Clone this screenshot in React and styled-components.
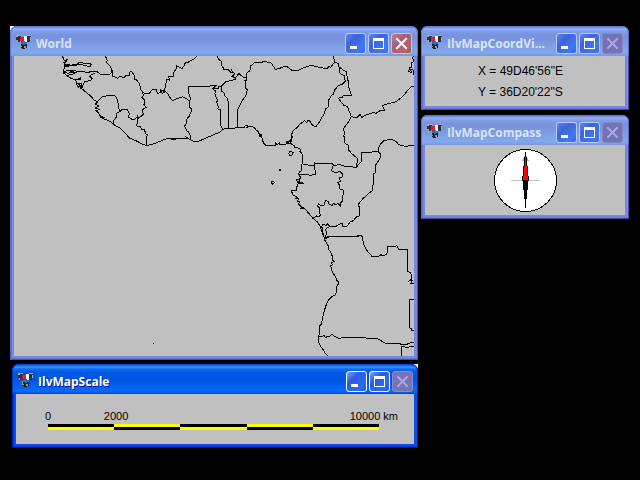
import React from "react";
import styled, { createGlobalStyle, css } from "styled-components";

const GlobalStyle = createGlobalStyle`
  *, *::before, *::after { box-sizing: border-box; }
  body {
    margin: 0;
    background: #000;
    color: #000;
    font-family: "Liberation Sans", Arial, sans-serif;
    font-size: 12px;
  }
`;

const Desktop = styled.main`
  min-height: 100vh;
  padding: 26px 11px 32px 10px;
  display: grid;
  grid-template-columns: minmax(0, 51fr) minmax(0, 26fr);
  align-items: start;
  column-gap: 3px;
`;

const Column = styled.div`
  display: grid;
  grid-template-columns: minmax(0, 1fr);
  row-gap: ${(p) => p.$gap}px;
`;

/* The square behind a window; its rounded corners can show a light chip. */
const Slot = styled.div`
  margin-left: ${(p) => (p.$inset ? 2 : 0)}px;
  background: ${(p) =>
    p.$chip ? `linear-gradient(#fff, #fff) top ${p.$chip} / 4px 4px no-repeat` : "none"};
`;

const Frame = styled.section`
  border-radius: 7px 7px 0 0;
  padding: 0 4px 4px;
  ${(p) =>
    p.$active
      ? css`
          background: #0b4ee6;
          box-shadow: inset 1px 0 #0019cf, inset -1px -1px #00138c, inset 2px -2px #0831d9;
        `
      : css`
          background: #7689e0;
          box-shadow: inset 1px 0 #5f68c8, inset -1px -1px #4a4fae, inset 2px -2px #6575d6;
        `}
`;

const TitleBar = styled.header`
  height: 30px;
  margin: 0 -4px;
  padding: 4px ${(p) => (p.$active ? 5 : 6)}px 0 6px;
  display: flex;
  align-items: center;
  gap: 4px;
  border-radius: 7px 7px 0 0;
  background: ${(p) =>
    p.$active
      ? "linear-gradient(#0a50d8 0, #0a50d8 1px, #3a95ff 3px, #0a6cf4 5px, #0058e6 8px, #0054e3 16px, #0560f5 22px, #0669ff 27px, #0053dd 29px, #0044c4 30px)"
      : "linear-gradient(#6479d6 0, #6479d6 1px, #94b4f2 3px, #829fe6 5px, #7893dd 9px, #7a96df 15px, #80a1e7 21px, #82a9ec 27px, #7a93e0 30px)"};
  box-shadow: inset 1px 0 ${(p) => (p.$active ? "#0038b8" : "#6676d0")},
    inset -1px 0 ${(p) => (p.$active ? "#0030a8" : "#5c68c2")};
`;

const Title = styled.h1`
  flex: 1;
  min-width: 0;
  margin: 0;
  padding-top: 2px;
  overflow: hidden;
  white-space: nowrap;
  text-overflow: ellipsis;
  font: 700 12px/18px "Open Sans", "Noto Sans", sans-serif;
  color: ${(p) => (p.$active ? "#fff" : "#d8e4f8")};
  text-shadow: ${(p) => (p.$active ? "1px 1px #0a1883" : "none")};
`;

const Controls = styled.div`
  display: flex;
  gap: 2px;
`;

const buttonLooks = {
  active: css`
    border-color: #fff;
    background: linear-gradient(135deg, #7ba2f5, #2a5be0 35%, #2a6cf5 75%, #2456cf);
  `,
  inactive: css`
    border-color: #b9cbf4;
    background: linear-gradient(135deg, #5f84e8, #3b64dc 35%, #4079f0 75%, #3768e0);
  `,
  close: css`
    border-color: #cbbfdc;
    background: linear-gradient(135deg, #ba7c90, #a86075 40%, #b5636c 80%, #a05568);
  `,
  disabledActive: css`
    border-color: #8e8dc9;
    background: #7673b6;
  `,
  disabled: css`
    border-color: #8587c8;
    background: #7272b4;
  `,
};

const CaptionButton = styled.button`
  width: 21px;
  height: 21px;
  padding: 0;
  display: grid;
  place-items: center;
  border: 1px solid;
  border-radius: 3px;
  color: #fff;
  ${(p) => buttonLooks[p.$look]}
  &:disabled { color: #a9a9da; }
`;

const Icon = styled.svg`
  display: block;
  flex: none;
`;

const Client = styled.div`
  background: #c0c0c0;
`;

const MapView = styled.svg`
  display: block;
  width: 100%;
  aspect-ratio: 4 / 3;
  fill: none;
  stroke: #000;
  shape-rendering: crispEdges;
  path, circle { vector-effect: non-scaling-stroke; }
`;

const Readout = styled.div`
  height: 50px;
  padding: 5px 0 3px 53px;
  line-height: 21px;
`;

const Line = styled.div`
  white-space: nowrap;
`;

const CompassView = styled.div`
  height: 70px;
  display: grid;
  place-items: center;
`;

const ScaleView = styled.div`
  height: 50px;
  padding: 15px 16px 0 29px;
`;

const Labels = styled.div`
  display: grid;
  grid-template-columns: 1fr 1fr 4fr;
  font-size: 11px;
  line-height: 15px;
`;

const Label = styled.span`
  white-space: nowrap;
  justify-self: ${(p) => (p.$end ? "end" : "start")};
`;

const Bar = styled.div`
  display: flex;
  margin: 0 19px 0 3px;
`;

const Segment = styled.div`
  flex: 1;
  height: 6px;
  border: 0 solid ${(p) => (p.$flip ? "#ff0" : "#000")};
  border-top-width: 3px;
  background: ${(p) => (p.$flip ? "#000" : "#ff0")};
`;

function AppIcon() {
  return (
    <Icon width="16" height="16" viewBox="0 0 16 16" aria-hidden="true" shapeRendering="crispEdges">
      <path d="M0 1h5v5H4v1H1V5H0zM11 1h4v4h-1v2h-3z" fill="#303030" />
      <path d="M0 0h5v1H2v1H0zM11 0h4v1h-4zM14 2h1v3h-1zM1 5h1v2H1z" fill="#aaa" />
      <path d="M4 2h4v4H7v1H5V6H4z" fill="#f01820" />
      <path d="M8 1h3v6H9V6H8z" fill="#fff" />
      <path d="M5 7h2V6h2v1h2v2H9v1H7V9H5z" fill="#1478c8" />
      <path d="M5 9h2v1h2V9h2v4H9v1H6v-1H5z" fill="#202020" />
      <path d="M4 8h1v3h1v1H4zM8 11h2v2H8z" fill="#999" />
    </Icon>
  );
}

const glyphs = {
  Minimize: <path d="M4 12h7v3H4z" fill="currentColor" />,
  Maximize: (
    <path d="M4 4h11v11H4zM5 7v7h9V7z" fill="currentColor" fillRule="evenodd" />
  ),
  Close: (
    <path d="M5 5l9 9M14 5l-9 9" stroke="currentColor" strokeWidth="2" strokeLinecap="square" />
  ),
};

function Control({ name, look, disabled }) {
  return (
    <CaptionButton type="button" aria-label={name} $look={look} disabled={disabled}>
      <Icon
        width="19"
        height="19"
        viewBox="0 0 19 19"
        aria-hidden="true"
        shapeRendering={name === "Close" ? "auto" : "crispEdges"}
      >
        {glyphs[name]}
      </Icon>
    </CaptionButton>
  );
}

function Window({ title, active, closable, chip, inset, children }) {
  const look = active ? "active" : "inactive";
  const closeLook = closable ? "close" : active ? "disabledActive" : "disabled";
  return (
    <Slot $chip={chip} $inset={inset}>
      <Frame $active={active} aria-label={title}>
        <TitleBar $active={active}>
          <AppIcon />
          <Title $active={active}>{title}</Title>
          <Controls>
            <Control name="Minimize" look={look} />
            <Control name="Maximize" look={look} />
            <Control name="Close" look={closeLook} disabled={!closable} />
          </Controls>
        </TitleBar>
        <Client>{children}</Client>
      </Frame>
    </Slot>
  );
}

/* Coastlines and borders, in sheets with three units to the pixel. */
const sheets = [
  {
    x: -14,
    y: -36,
    lines: [
      "186,108 190,114 193,122 202,118 196,125 201,124 192,128 196,136 222,138 196,132 206,140 194,138 191,150 192,160 200,166 212,164 204,160 192,156 204,150 228,152 210,156 228,158 216,164 200,166 214,176 232,180 242,172 240,180 226,180 230,188 242,198 236,202 228,192 244,190 246,204 240,204 248,208 262,220 272,228 282,240 292,246 286,252 296,258 286,264 298,268 288,272 296,280 302,292 310,292 300,286 310,296 326,302 338,310 344,316 360,324 376,340 388,354 408,362 430,374 442,376 460,372 480,364 500,356 528,358 530,354 510,356 560,355 558,351 572,360 584,366 600,362 614,356 630,348",
      "200,137 230,133 240,126 256,132 266,130 274,133 270,140 260,138 240,132 222,138 200,136",
      "200,160 228,156 242,154 266,158 270,154 290,154 300,162 308,165 330,162 337,153",
      "246,204 250,192 254,184 272,182 276,176 270,170 274,164 286,158",
      "316,108 322,122 318,126 332,140 337,154 336,168 344,170 354,175 360,168 372,174 376,168 388,166 390,156 396,156 402,165 404,180 410,180 418,190 422,208 428,215",
      "290,248 298,238 308,230 330,226 346,228 352,240 356,256 358,276 350,280 350,290 342,300 340,310",
      "358,276 366,268 382,268 388,280 386,292 400,300 412,292 420,292",
      "428,215 430,226 426,232 434,240 432,254 438,262 426,270 430,282 422,290 416,294 412,288 412,308 410,318 420,320 426,328 434,328 436,340 442,344 438,360 440,376",
      "428,215 434,222 446,222 458,208 468,208 472,220 480,218 482,206 486,220 494,216 488,210",
      "494,212 504,222 512,236 518,242 530,236 548,230 560,236 568,244 572,236 566,218 566,200 630,200",
      "493,216 496,200 500,178 508,180 506,170 522,168 522,156 530,144 530,138 546,146 552,138 556,128 562,128 580,118 592,108",
      "568,244 570,262 576,268 568,288 558,300 560,308 554,318 560,332 566,336 570,346 572,360",
    ],
  },
  {
    x: 196,
    y: -36,
    lines: [
      "0,349 16,342 30,336 38,328 52,325 70,325 82,322 104,322 106,316 122,320 108,322 122,318 134,324 140,332 146,336",
      "0,198 16,198 8,206 18,214 14,220 18,232 24,240 20,246 26,262 22,266 32,270 30,300 34,322 40,330",
      "10,206 24,206 26,200 34,200 34,214 42,218 44,228 50,232 56,248 56,325",
      "26,200 34,198 46,186 60,182 76,178 76,172 64,170 74,160 64,156",
      "22,108 26,118 36,126 34,134 42,148 56,150 62,158 64,150 74,162 68,168 76,174 84,164 86,160 100,172 108,172",
      "370,108 374,126 362,142 356,140 350,146 338,144 304,136 290,140 274,146 266,151 246,151 236,144 232,140 222,140 206,146 196,148 184,130 180,128 160,124 156,127 134,127 122,138 120,152 110,160 110,180 104,182 108,190 106,204 112,210 108,226 94,246 86,262 82,270 84,321",
      "374,126 384,130 386,140 400,150 410,156 412,180 416,182 416,200 424,226 400,226 398,232 386,234 390,242 402,256 412,260 424,290",
      "388,142 388,156 392,162 402,166 406,184 398,192 386,196 374,210 370,224 364,226 356,240 354,262 346,266 344,280 332,298 330,304 318,320 308,316 298,302 294,300 290,308 284,302 270,312 264,320 248,334 244,352 246,366",
      "424,290 440,294 450,284 456,292 466,286 490,278 498,280 510,272 524,270 518,258 524,254 548,248 560,244 580,228 592,212 604,200 614,199",
      "424,290 414,308 400,326 404,342 400,350",
      "614,108 606,112 612,124 606,128 606,142 600,142 596,154 604,158 602,148 610,150 610,166",
    ],
  },
  {
    x: 236,
    y: 74,
    lines: [
      "20,0 28,12 36,14 36,24 28,18 34,16 40,38 48,46 70,46 78,46 78,40 82,44 88,38 90,44 108,42 110,34 118,40 126,42 112,40 120,32 126,44 134,48 132,54 144,54 152,58 150,64 158,74 158,88 156,102 154,122 148,126 146,134 152,142 148,150 140,148 142,158 150,152 146,160 162,160 148,156 142,166 138,182 124,183 130,196 142,202 138,206 146,206 142,214 148,214 146,222 154,232 152,236 162,234 152,230 166,238 178,252 188,264 202,276 210,288 216,306 222,322",
      "130,0 124,14 128,20 120,34",
      "280,20 284,20 284,38 290,44 296,46 296,60 304,70 314,78 322,84 322,98 318,102 322,112",
      "158,104 190,106 194,106 196,134 178,136 170,132 146,134",
      "194,106 194,99 246,100 252,106 270,104 282,108 304,110 320,114 324,104 334,96 334,68 360,68 372,64 386,66 384,56 390,44 402,32 418,28 428,30 440,36 444,42 452,46 472,50 478,46 492,48",
      "386,66 392,72 390,84 382,98 376,106 376,128 372,130 370,148 368,182 358,188 344,202 340,204 326,222 328,236 328,258 320,260 310,272 300,276 290,290 276,288 278,280 274,280 256,290 240,290 232,282 230,286 218,284 214,294",
      "250,104 244,122 256,128 270,124 276,130 278,140 268,144 272,154 264,158 270,168 268,176 280,180 278,212 272,218 272,228 264,220 256,224 250,220 248,226 238,224 234,214 226,212 222,226 214,228 206,222 202,228 210,234 208,246 212,256 206,260 200,258 188,266",
      "240,290 232,294 226,298 230,310 226,322 232,324",
      "218,290 218,312 222,322 228,326 240,320 328,318",
      "116,68 120,66 120,64 130,68 126,76 118,76 116,68",
      "68,152 74,158 68,162 64,158 68,152",
      "88,118 91,118 91,121 88,121 88,118",
    ],
  },
  {
    x: 286,
    y: 174,
    lines: [
      "66,0 70,14 72,22 74,30 80,40 86,50 86,58 92,66 98,82 98,90 102,94 94,98 98,104 90,108 96,114 96,124 106,140 110,150 115,156 114,164 110,170 108,190 104,196 96,200 84,212 76,232 72,246 68,262 64,282 58,288 58,312 55,318 56,336 62,350 72,362 76,370 84,378",
      "74,22 92,19 172,19 174,16 182,16 188,22 190,42 196,54 206,68 216,79 238,78 242,74 250,77 258,74 264,66 264,50 286,50 290,46 296,58 322,58 324,86 322,124 332,128 336,146 330,152 338,150 332,162 342,162",
      "342,208 328,208 328,292 334,296 336,302 342,302",
      "56,318 66,320 72,316 76,322 90,318 96,312 104,320 118,325 134,322 180,322 208,325 230,325 250,336 258,340 300,340 302,344 322,344 324,340 342,337",
      "304,378 304,350 326,352 330,349 342,348",
      "-441,340 -438,340",
    ],
  },
];

function WorldMap() {
  return (
    <MapView viewBox="0 0 400 300" role="img" aria-label="Map of West and Central Africa">
      {sheets.map((sheet) => (
        <g key={sheet.x} transform={`translate(${sheet.x} ${sheet.y}) scale(0.33333)`}>
          {sheet.lines.map((line) => (
            <path key={line} d={`M${line}`} />
          ))}
        </g>
      ))}
    </MapView>
  );
}

function Compass() {
  return (
    <Icon width="63" height="63" viewBox="0 0 63 63" role="img" aria-label="Compass pointing north">
      <circle cx="31.5" cy="31.5" r="31" fill="#fff" stroke="#000" shapeRendering="crispEdges" />
      <g shapeRendering="crispEdges">
        <path d="M17 31h29v1H17z" fill="#c0c0c0" />
        <path d="M31 5h1v2h1v2h1v2h1v1h-7v-1h1V9h1V7h1z" fill="#b0b0b0" />
        <path d="M31 3h1v5h1v9h1v10h1v5h-7v-5h1V17h1V8h1z" fill="#000" />
        <path d="M31 8h1v9h1v10h1v4h-5v-4h1V17h1z" fill="#f00" />
        <path d="M29 32h5v9h-1v9h-1v9h-1v-9h-1v-9h-1z" fill="#000" />
      </g>
    </Icon>
  );
}

const segments = [false, true, false, true, false];

export default function App() {
  return (
    <>
      <GlobalStyle />
      <Desktop>
        <Column $gap={4}>
          <Window title="World" closable chip="left">
            <WorldMap />
          </Window>
          <Window title="IlvMapScale" active inset chip="right">
            <ScaleView>
              <Labels>
                <Label>0</Label>
                <Label>2000</Label>
                <Label $end>10000 km</Label>
              </Labels>
              <Bar>
                {segments.map((flip, i) => (
                  <Segment key={i} $flip={flip} />
                ))}
              </Bar>
            </ScaleView>
          </Window>
        </Column>
        <Column $gap={5}>
          <Window title="IlvMapCoordVi...">
            <Readout>
              <Line>X = 49D46'56"E</Line>
              <Line>Y = 36D20'22"S</Line>
            </Readout>
          </Window>
          <Window title="IlvMapCompass">
            <CompassView>
              <Compass />
            </CompassView>
          </Window>
        </Column>
      </Desktop>
    </>
  );
}
